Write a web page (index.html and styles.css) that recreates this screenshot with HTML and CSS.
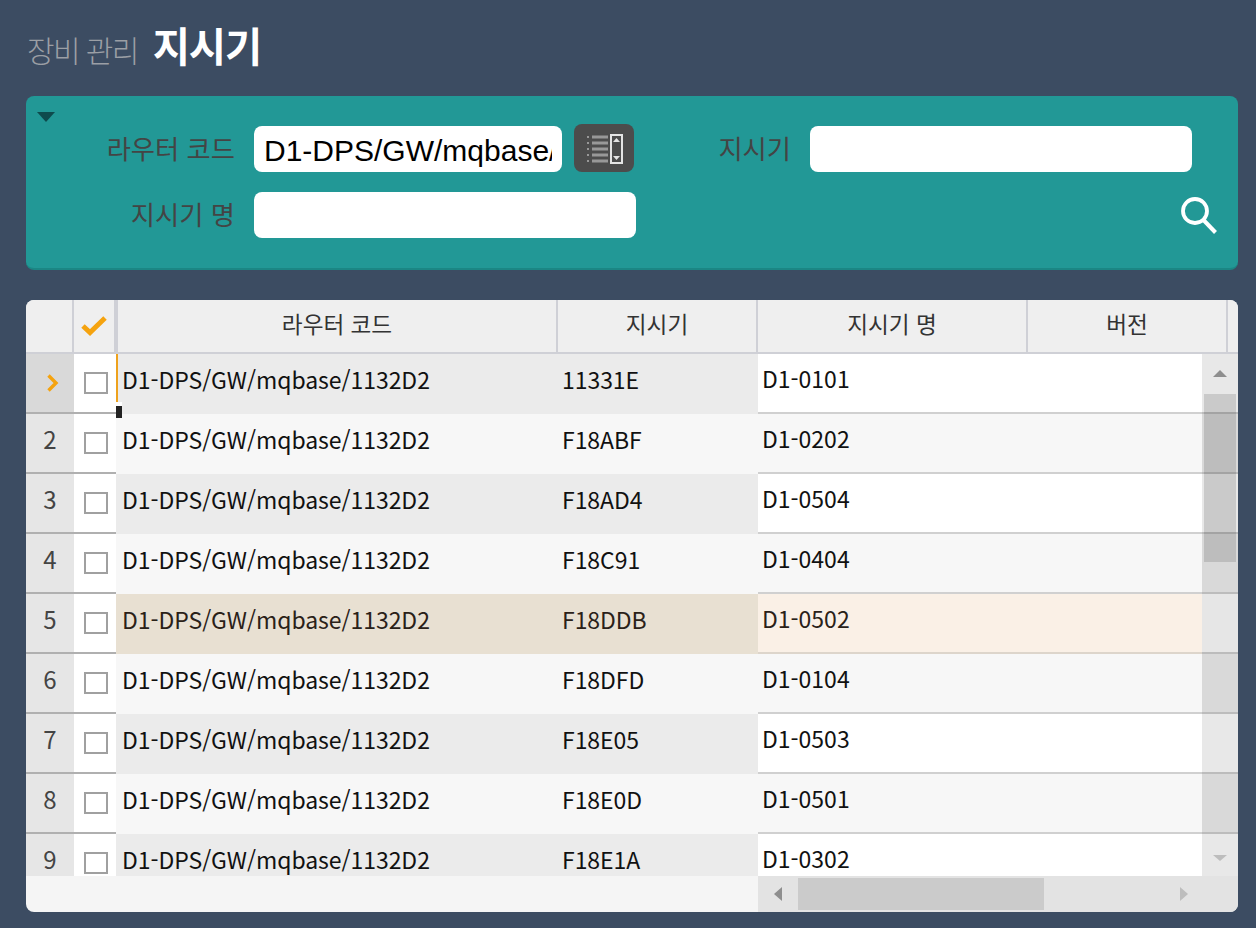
FILE: index.html
```html
<!DOCTYPE html>
<html lang="ko">
<head>
    <meta charset="UTF-8">
    <title>지시기</title>
    <link rel="stylesheet" href="styles.css">
</head>
<body>
    <div class="title">
        <span class="title-path">장비 관리</span>
        <span class="title-name">지시기</span>
    </div>

    <form class="search">
        <span class="collapse"></span>
        <label class="search-label">라우터 코드</label>
        <div class="code-field">
            <input class="search-input" type="text" value="D1-DPS/GW/mqbase/1132D2">
            <button class="picker" type="button">
                <svg width="60" height="48" viewBox="0 0 60 48">
                    <g fill="#989898">
                        <rect x="13" y="12" width="2" height="2"/>
                        <rect x="13" y="18" width="2" height="2"/>
                        <rect x="13" y="24" width="2" height="2"/>
                        <rect x="13" y="30" width="2" height="2"/>
                        <rect x="13" y="36" width="2" height="2"/>
                        <rect x="18" y="11.5" width="16" height="3"/>
                        <rect x="18" y="17.5" width="16" height="3"/>
                        <rect x="18" y="23.5" width="16" height="3"/>
                        <rect x="18" y="29.5" width="16" height="3"/>
                        <rect x="18" y="35.5" width="16" height="3"/>
                    </g>
                    <rect x="37" y="11" width="11" height="28" fill="none" stroke="#e4e4e4" stroke-width="2"/>
                    <path d="M42.5 14l3.5 4h-7zM42.5 36l-3.5-4h7z" fill="#e4e4e4"/>
                </svg>
            </button>
        </div>
        <label class="search-label">지시기</label>
        <input class="search-input" type="text">
        <label class="search-label">지시기 명</label>
        <input class="search-input" type="text">
        <button class="search-btn" type="button">
            <svg width="38" height="38" viewBox="0 0 38 38">
                <circle cx="15" cy="15" r="12" fill="none" stroke="#fff" stroke-width="3.8"/>
                <path d="M23.5 24L35.5 36.5" fill="none" stroke="#fff" stroke-width="4"/>
            </svg>
        </button>
    </form>

    <div class="grid">
        <div class="grid-head">
            <div class="head-cell"></div>
            <div class="head-cell head-check">
                <svg width="26" height="20" viewBox="0 0 26 20">
                    <path d="M2 10l7 6.5L24 2" fill="none" stroke="#f5a30f" stroke-width="5"/>
                </svg>
            </div>
            <div class="head-cell">라우터 코드</div>
            <div class="head-cell">지시기</div>
            <div class="head-cell">지시기 명</div>
            <div class="head-cell">버전</div>
            <div class="head-rest"></div>
        </div>

        <div class="grid-body">
            <div class="row row-odd row-current">
                <div class="cell-num">
                    <svg width="12" height="18" viewBox="0 0 12 18">
                        <path d="M1.5 1.5l7.5 7.5-7.5 7.5" fill="none" stroke="#f5a30f" stroke-width="3.4"/>
                    </svg>
                </div>
                <div class="cell-check"><span class="checkbox"></span></div>
                <div class="cell-fixed">D1-DPS/GW/mqbase/1132D2</div>
                <div class="cell-fixed cell-ind">11331E</div>
                <div class="cell-name">D1-0101</div>
                <div class="cell-end"></div>
            </div>
            <div class="row row-even">
                <div class="cell-num">2</div>
                <div class="cell-check"><span class="checkbox"></span></div>
                <div class="cell-fixed">D1-DPS/GW/mqbase/1132D2</div>
                <div class="cell-fixed cell-ind">F18ABF</div>
                <div class="cell-name">D1-0202</div>
                <div class="cell-end"></div>
            </div>
            <div class="row row-odd">
                <div class="cell-num">3</div>
                <div class="cell-check"><span class="checkbox"></span></div>
                <div class="cell-fixed">D1-DPS/GW/mqbase/1132D2</div>
                <div class="cell-fixed cell-ind">F18AD4</div>
                <div class="cell-name">D1-0504</div>
                <div class="cell-end"></div>
            </div>
            <div class="row row-even">
                <div class="cell-num">4</div>
                <div class="cell-check"><span class="checkbox"></span></div>
                <div class="cell-fixed">D1-DPS/GW/mqbase/1132D2</div>
                <div class="cell-fixed cell-ind">F18C91</div>
                <div class="cell-name">D1-0404</div>
                <div class="cell-end"></div>
            </div>
            <div class="row row-hover">
                <div class="cell-num">5</div>
                <div class="cell-check"><span class="checkbox"></span></div>
                <div class="cell-fixed">D1-DPS/GW/mqbase/1132D2</div>
                <div class="cell-fixed cell-ind">F18DDB</div>
                <div class="cell-name">D1-0502</div>
                <div class="cell-end"></div>
            </div>
            <div class="row row-even">
                <div class="cell-num">6</div>
                <div class="cell-check"><span class="checkbox"></span></div>
                <div class="cell-fixed">D1-DPS/GW/mqbase/1132D2</div>
                <div class="cell-fixed cell-ind">F18DFD</div>
                <div class="cell-name">D1-0104</div>
                <div class="cell-end"></div>
            </div>
            <div class="row row-odd">
                <div class="cell-num">7</div>
                <div class="cell-check"><span class="checkbox"></span></div>
                <div class="cell-fixed">D1-DPS/GW/mqbase/1132D2</div>
                <div class="cell-fixed cell-ind">F18E05</div>
                <div class="cell-name">D1-0503</div>
                <div class="cell-end"></div>
            </div>
            <div class="row row-even">
                <div class="cell-num">8</div>
                <div class="cell-check"><span class="checkbox"></span></div>
                <div class="cell-fixed">D1-DPS/GW/mqbase/1132D2</div>
                <div class="cell-fixed cell-ind">F18E0D</div>
                <div class="cell-name">D1-0501</div>
                <div class="cell-end"></div>
            </div>
            <div class="row row-odd">
                <div class="cell-num">9</div>
                <div class="cell-check"><span class="checkbox"></span></div>
                <div class="cell-fixed">D1-DPS/GW/mqbase/1132D2</div>
                <div class="cell-fixed cell-ind">F18E1A</div>
                <div class="cell-name">D1-0302</div>
                <div class="cell-end"></div>
            </div>

            <span class="cursor-handle"></span>
            <div class="vscroll">
                <span class="arrow-up"></span>
                <span class="vthumb"></span>
                <span class="arrow-down"></span>
            </div>
        </div>

        <div class="grid-foot">
            <div class="hscroll">
                <span class="arrow-left"></span>
                <span class="hthumb"></span>
                <span class="arrow-right"></span>
            </div>
        </div>
    </div>
</body>
</html>
```

FILE: styles.css
```css
body {
    margin: 0;
    padding: 0 18px 16px 26px;
    background-color: #3c4c62;
    font-family: "Noto Sans CJK KR", "Noto Sans", sans-serif;
}
.title {
    display: flex;
    align-items: center;
    gap: 15px;
    height: 96px;
}
.title-path {
    margin: 2px 0 0 1px;
    color: #9b9fa5;
    font-size: 30px;
    font-weight: 300;
    letter-spacing: -1.6px;
}
.title-name {
    margin-top: -8px;
    color: #fff;
    font-size: 40.5px;
    font-weight: 700;
    letter-spacing: -1.2px;
}

.search {
    position: relative;
    display: grid;
    grid-template-columns: 188px 382px 134px 382px 1fr;
    grid-auto-rows: 46px;
    column-gap: 20px;
    row-gap: 20px;
    align-items: center;
    height: 142px;
    padding: 30px 20px 0;
    background-color: #229896;
    border-bottom: 2px solid #1b8684;
    border-radius: 8px;
}
.collapse {
    position: absolute;
    top: 16px;
    left: 11px;
    border-top: 10px solid #0e4b4d;
    border-left: 9px solid transparent;
    border-right: 9px solid transparent;
}
.search-label {
    margin-right: -1px;
    padding-bottom: 3px;
    color: #444;
    font-size: 26.3px;
    line-height: 1.2;
    text-align: right;
    white-space: nowrap;
}
.search-label:nth-of-type(2) {
    grid-column: 3;
}
.search-label:nth-of-type(3) {
    grid-column: 1;
}
.search-input {
    box-sizing: border-box;
    width: 100%;
    height: 46px;
    padding: 4px 10px 0;
    background: #fff;
    border: none;
    border-radius: 8px;
    color: #000;
    font-family: "Liberation Sans", Arial, sans-serif;
    font-size: 30px;
}
.code-field {
    display: flex;
    align-items: flex-end;
    gap: 12px;
    height: 46px;
}
.code-field .search-input {
    width: 308px;
    flex: none;
}
.picker {
    flex: none;
    width: 60px;
    height: 48px;
    padding: 0;
    background: #4c4c4c;
    border: none;
    border-radius: 8px;
}
.picker svg, .search-btn svg {
    display: block;
}
.search-btn {
    grid-column: 4 / 6;
    justify-self: end;
    width: 38px;
    height: 38px;
    padding: 0;
    background: none;
    border: none;
}

.grid {
    overflow: hidden;
    margin-top: 30px;
    background: #f5f5f5;
    border-radius: 8px;
}
.grid-head {
    display: grid;
    grid-template-columns: 48px 44px 440px 200px 270px 200px 1fr;
    height: 52px;
    background: #efefef;
    border-bottom: 2px solid #cfd0d6;
}
.head-cell {
    display: flex;
    align-items: center;
    justify-content: center;
    padding-bottom: 5px;
    box-sizing: border-box;
    border-right: 2px solid #cfd0d6;
    color: #333;
    font-size: 22.6px;
    line-height: 1.2;
}
.head-check {
    padding-bottom: 0;
    border-right-width: 4px;
}
.grid-body {
    position: relative;
    height: 522px;
    overflow: hidden;
}
.row {
    display: grid;
    grid-template-columns: 48px 42px 442px 200px 444px 36px;
    height: 60px;
    color: #111;
    font-size: 23px;
    line-height: 1.2;
}
.row > div {
    display: flex;
    align-items: center;
    box-sizing: border-box;
}
.cell-num {
    justify-content: center;
    padding-bottom: 8px;
    background: #e6e6e6;
    border-bottom: 2px solid #b0b0b0;
    color: #444;
    font-size: 24px;
}
.cell-check {
    padding-left: 10px;
    background: #fff;
    border-bottom: 2px solid #b0b0b0;
}
.checkbox {
    box-sizing: border-box;
    width: 24px;
    height: 22px;
    background: #fff;
    border: 2px solid #a0a0a0;
}
.cell-fixed {
    padding: 0 0 8px 6px;
    letter-spacing: -0.05px;
}
.cell-fixed.cell-ind {
    padding-left: 4px;
}
.cell-name {
    padding: 0 0 8px 4px;
    border-bottom: 2px solid #d0d0d0;
}
.cell-end {
    border-bottom: 2px solid #bcbcbc;
}
.row-odd .cell-fixed {
    background: #ebebeb;
}
.row-even .cell-fixed {
    background: #f7f7f7;
}
.row-odd .cell-name {
    background: #fff;
}
.row-even .cell-name {
    background: #f7f7f7;
}
.row-odd .cell-end {
    background: #e8e8e8;
}
.row-even .cell-end {
    background: #d9d9d9;
}
.row-hover {
    color: #2a2118;
}
.row-hover .cell-fixed {
    background: #e8e0d2;
}
.row-hover .cell-name {
    background: #faf0e6;
    border-bottom-color: #ddd5cb;
}
.row-hover .cell-end {
    background: #e6e6e6;
}
.row-current .cell-num {
    padding: 0 0 0 5px;
    background: #d9d9d9;
}
.row-current .cell-fixed:nth-child(3) {
    box-shadow: inset 2px 0 0 #eea21d;
}
.cursor-handle {
    position: absolute;
    top: 52px;
    left: 90px;
    width: 6px;
    height: 12px;
    background: #222;
    box-shadow: 0 -4px 0 #fff;
}
.vscroll {
    position: absolute;
    top: 0;
    right: 0;
    width: 36px;
    height: 522px;
}
.arrow-up, .arrow-down {
    position: absolute;
    left: 11px;
    border-left: 7px solid transparent;
    border-right: 7px solid transparent;
}
.arrow-up {
    top: 16px;
    border-bottom: 7px solid #8e8e8e;
}
.arrow-down {
    top: 501px;
    border-top: 6px solid #bdbdbd;
}
.vthumb {
    position: absolute;
    top: 40px;
    left: 2px;
    width: 32px;
    height: 168px;
    background: rgba(0, 0, 0, 0.13);
}

.grid-foot {
    display: flex;
    justify-content: flex-end;
    height: 36px;
}
.hscroll {
    position: relative;
    width: 480px;
    background: #e3e3e3;
}
.hthumb {
    position: absolute;
    top: 2px;
    left: 40px;
    width: 246px;
    height: 32px;
    background: #cbcbcb;
}
.arrow-left, .arrow-right {
    position: absolute;
    top: 11px;
    border-top: 7px solid transparent;
    border-bottom: 7px solid transparent;
}
.arrow-left {
    left: 16px;
    border-right: 8px solid #8e8e8e;
}
.arrow-right {
    left: 422px;
    border-left: 8px solid #bdbdbd;
}
```
